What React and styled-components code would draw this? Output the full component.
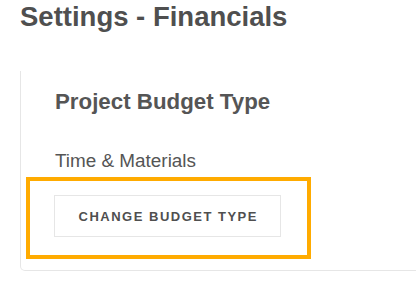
import React from "react";
import styled, { createGlobalStyle } from "styled-components";

const GlobalStyle = createGlobalStyle`
  html, body {
    margin: 0;
    padding: 0;
    background: #ffffff;
    overflow: hidden;
  }
  body {
    font-family: "Liberation Sans", Arial, sans-serif;
    color: #505050;
  }
`;

const Page = styled.div`
  width: 416px;
  height: 286px;
  padding-left: 20px;
  box-sizing: border-box;
  overflow: hidden;
`;

const Title = styled.h1`
  margin: 1px 0 38px;
  font-size: 27.5px;
  line-height: 32px;
  font-weight: 700;
  color: #4f4f4f;
`;

const Card = styled.section`
  width: 420px;
  border: 1px solid #e6e6e6;
  border-top: none;
  border-radius: 0 0 0 5px;
  padding: 18px 0 11px 5px;
`;

const Body = styled.div`
  padding-left: 29px;
`;

const Heading = styled.h2`
  margin: 0 0 35px;
  font-size: 22.3px;
  line-height: 26px;
  font-weight: 700;
  color: #555;
`;

const Value = styled.p`
  margin: 0 0 5px;
  font-size: 18.9px;
  line-height: 22px;
  color: #555;
`;

const Highlight = styled.div`
  width: 285px;
  box-sizing: border-box;
  border: 4px solid #ffab00;
  padding: 14px 0 18px 24px;
`;

const Button = styled.button`
  display: flex;
  align-items: center;
  justify-content: center;
  width: 227px;
  height: 42px;
  padding: 0 0 0 1.5px;
  background: #fff;
  border: 1px solid #e6e6e6;
  border-radius: 0;
  font-family: "Liberation Sans", Arial, sans-serif;
  font-size: 13px;
  font-weight: 700;
  letter-spacing: 1.5px;
  color: #4f4f4f;
  cursor: pointer;
`;

export default function App() {
  return (
    <Page>
      <GlobalStyle />
      <Title>Settings - Financials</Title>
      <Card>
        <Body>
          <Heading>Project Budget Type</Heading>
          <Value>Time &amp; Materials</Value>
        </Body>
        <Highlight>
          <Button>CHANGE BUDGET TYPE</Button>
        </Highlight>
      </Card>
    </Page>
  );
}
